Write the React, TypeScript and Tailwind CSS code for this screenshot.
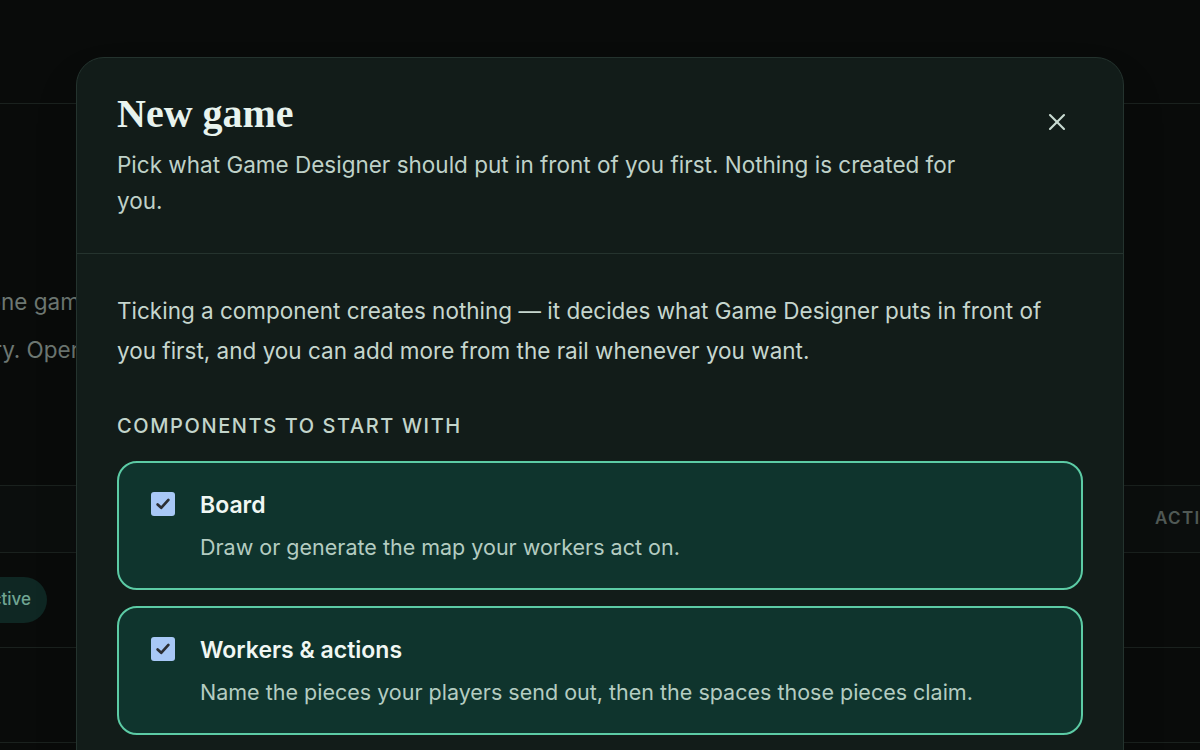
import { X } from 'lucide-react';

const components = [
  { name: 'Board', desc: 'Draw or generate the map your workers act on.' },
  { name: 'Workers & actions', desc: 'Name the pieces your players send out, then the spaces those pieces claim.' },
];

function Checkbox() {
  return (
    <div className="w-6 h-6 shrink-0 rounded-[3px] bg-[#a8c8f6] flex items-center justify-center">
      <svg width="18" height="18" viewBox="0 0 16 16" fill="none">
        <path d="M3.2 8.4 6.4 11.4 12.8 4.4" stroke="#2b2e33" strokeWidth="2.4" strokeLinecap="round" strokeLinejoin="round" />
      </svg>
    </div>
  );
}

export default function App() {
  return (
    <div
      className="relative w-[1200px] h-[750px] overflow-hidden bg-[#090b0a]"
      style={{ fontFamily: 'Inter, "Noto Sans", sans-serif' }}
    >
      {/* Page behind the dialog */}
      <div className="h-[104px] border-b border-[#1a211e]" />
      <div className="absolute left-0 top-[104px] w-full">
        <div className="pt-[174px] text-[22.5px] leading-[48px] text-[#6d7772]">
          <div className="flex justify-end w-[93px]">
            <span className="whitespace-nowrap">Every idea becomes one game</span>
          </div>
          <div className="flex justify-end w-[84px]">
            <span className="whitespace-nowrap">in your library. Open</span>
          </div>
        </div>
        <div className="mt-[111px] border-t border-[#1a211e]">
          <div className="h-[67px] bg-[#0b0e0d] border-b border-[#1a211e] flex items-center justify-end">
            <span className="w-[45px] text-[17px] font-semibold tracking-[0.08em] text-[#505955] whitespace-nowrap overflow-hidden">ACTIONS</span>
          </div>
          <div className="h-[95px] border-b border-[#1a211e] flex items-center">
            <div className="flex justify-end w-[47px]">
              <span className="whitespace-nowrap rounded-full bg-[#0f2723] px-4 py-2.5 text-[17px] font-medium text-[#6fa593]">Active</span>
            </div>
          </div>
          <div className="h-[95px] border-b border-[#1a211e]" />
        </div>
      </div>

      {/* Dialog */}
      <div className="absolute left-[76px] top-[57px] w-[1048px] rounded-[28px] border border-[#24332e] bg-[#121c19] shadow-2xl">
        <div className="flex items-start gap-6 px-10 pt-[31px] pb-[34px] border-b border-[#25332e]">
          <div className="flex-1">
            <h2
              className="text-[40px] leading-[50px] font-bold text-[#e8f3ee]"
              style={{ fontFamily: '"Liberation Serif", serif' }}
            >
              New game
            </h2>
            <p className="mt-[8px] text-[22.5px] leading-[36px] text-[#bfd1c8] max-w-[880px]">
              Pick what Game Designer should put in front of you first. Nothing is created for you.
            </p>
          </div>
          <button className="mt-[19px] mr-[12px] text-[#c9dbd2]">
            <X size={28} strokeWidth={1.8} />
          </button>
        </div>

        <div className="px-10 pt-[37px] pb-[56px]">
          <p className="text-[22.5px] leading-[40px] text-[#c6d6ce]">
            Ticking a component creates nothing — it decides what Game Designer puts in front of you first, and you can add more from the rail whenever you want.
          </p>
          <div className="mt-[40px] text-[20px] font-medium tracking-[0.08em] uppercase text-[#c3d5cb]">
            Components to start with
          </div>
          <div className="mt-[20px] flex flex-col gap-4">
            {components.map((c) => (
              <label
                key={c.name}
                className="flex gap-[25px] rounded-[20px] border-2 border-[#5ccba5] bg-[#0f342d] pl-[32px] pr-8 pt-[27px] pb-[25px]"
              >
                <div className="pt-[2px]">
                  <Checkbox />
                </div>
                <div className="flex flex-col gap-[11px]">
                  <span className="text-[23px] leading-[30px] font-semibold text-[#f0f7f3]">{c.name}</span>
                  <span className="text-[21.5px] leading-[32px] text-[#b4ccc1]">{c.desc}</span>
                </div>
              </label>
            ))}
          </div>
        </div>
      </div>
    </div>
  );
}
